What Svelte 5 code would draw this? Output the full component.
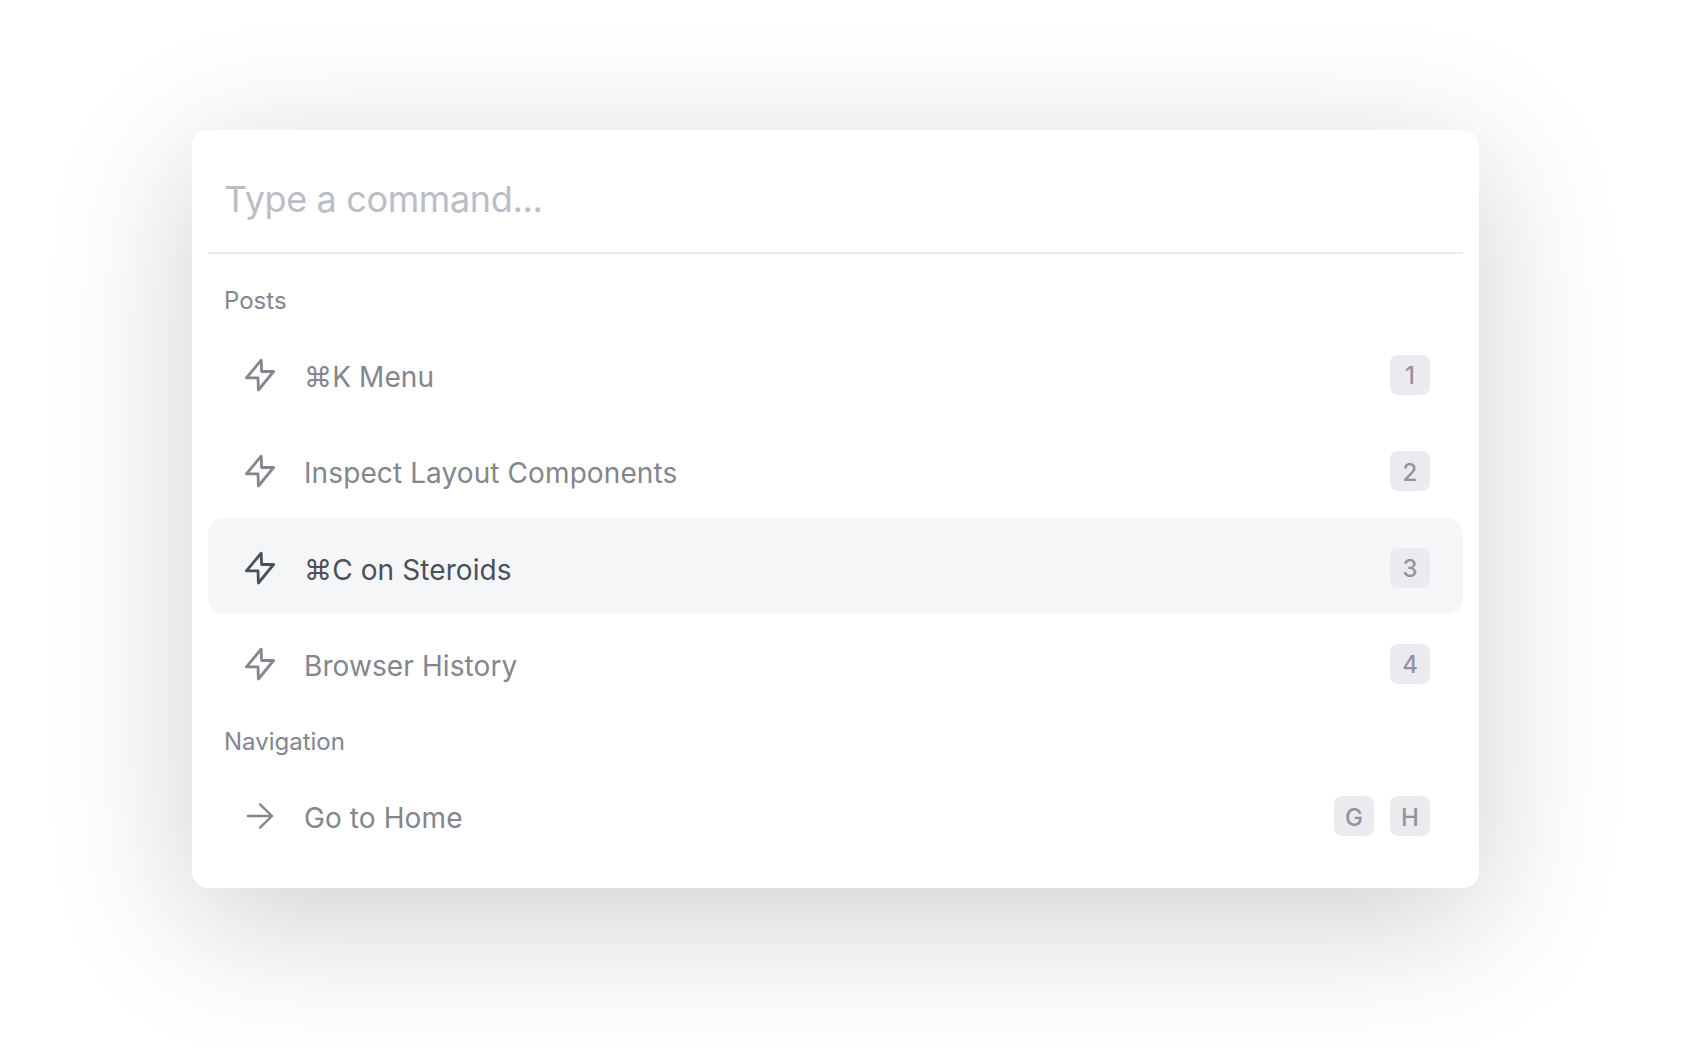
<script>
  const groups = [
    {
      heading: 'Posts',
      items: [
        { label: '⌘K Menu', icon: 'bolt', keys: ['1'] },
        { label: 'Inspect Layout Components', icon: 'bolt', keys: ['2'] },
        { label: '⌘C on Steroids', icon: 'bolt', keys: ['3'] },
        { label: 'Browser History', icon: 'bolt', keys: ['4'] }
      ]
    },
    {
      heading: 'Navigation',
      items: [{ label: 'Go to Home', icon: 'arrow', keys: ['G', 'H'] }]
    }
  ];
  let active = $state('⌘C on Steroids');
</script>

<main>
  <section class="palette">
    <div class="search"><span>Type a command...</span></div>
    {#each groups as group}
      <h2>{group.heading}</h2>
      <ul>
        {#each group.items as item}
          <li class:active={item.label === active} onpointerenter={() => (active = item.label)}>
            <svg viewBox="0 0 36 36" aria-hidden="true">
              {#if item.icon === 'bolt'}
                <path d="M20.2 3.2 5.4 20.8H17L17.4 33 32.6 14.5H20.6Z" />
              {:else}
                <path class="thin" d="M7 18H31M19 6.3 31 18 19 29.7" />
              {/if}
            </svg>
            <span class="label">{item.label}</span>
            <span class="keys">
              {#each item.keys as key}<kbd>{key}</kbd>{/each}
            </span>
          </li>
        {/each}
      </ul>
    {/each}
  </section>
</main>

<style>
  :global(body) {
    margin: 0;
    background: #fff;
    overflow: hidden;
  }
  main {
    box-sizing: border-box;
    width: 1694px;
    height: 1048px;
    padding: 130px 215px 0 192px;
    background: #fff;
    font-family: Inter, 'Liberation Sans', sans-serif;
  }
  .palette {
    box-sizing: border-box;
    height: 758px;
    padding: 16px;
    border-radius: 16px;
    background: #fff;
    box-shadow: 0 32px 144px rgb(0 0 0 / 19.5%);
  }
  .search {
    box-sizing: border-box;
    height: 108px;
    padding: 31px 16px 0;
    border-bottom: 2px solid #ececee;
    color: #babdc5;
    font-size: 36px;
    letter-spacing: -0.36px;
    line-height: 44px;
  }
  h2 {
    box-sizing: border-box;
    margin: 0;
    padding: 31px 16px 0;
    height: 71px;
    color: #82868e;
    font-size: 24px;
    font-weight: 400;
    line-height: 32px;
  }
  ul + h2 {
    height: 56px;
    padding-top: 16px;
  }
  ul {
    margin: 0;
    padding: 0;
    list-style: none;
  }
  li {
    display: flex;
    align-items: center;
    box-sizing: border-box;
    height: 96.3px;
    padding: 3.6px 33px 0;
    border-radius: 16px;
    color: #82868e;
    font-size: 28px;
  }
  li.active {
    background: #f5f6f8;
    color: #4c5058;
  }
  svg {
    width: 36px;
    height: 36px;
    margin-right: 27px;
    fill: none;
    stroke: currentColor;
    stroke-width: 2.8;
    stroke-linejoin: round;
    stroke-linecap: round;
  }
  .thin {
    stroke-width: 2.4;
  }
  .label {
    flex: 1;
    padding-top: 4px;
    letter-spacing: 0.1px;
  }
  .keys {
    display: flex;
    gap: 16px;
  }
  kbd {
    box-sizing: border-box;
    width: 40px;
    height: 40px;
    padding-top: 1.5px;
    border-radius: 8px;
    background: #ebebef;
    color: #929499;
    font: 500 24px/40px Inter, sans-serif;
    text-align: center;
  }
</style>
